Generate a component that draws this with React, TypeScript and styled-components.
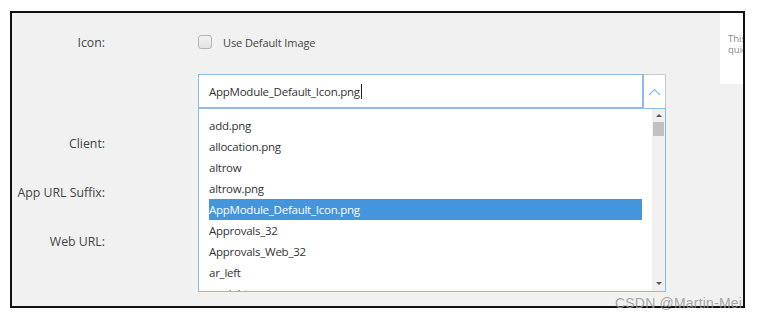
import React from "react";
import styled, { createGlobalStyle } from "styled-components";

const Global = createGlobalStyle`
  html, body { margin: 0; padding: 0; background: #ffffff; }
  body { font-family: "Segoe UI", "Open Sans", "Noto Sans", sans-serif; }
`;

const Page = styled.div`
  width: 765px;
  height: 319px;
  position: relative;
  overflow: hidden;
  padding: 11px 0 0 10px;
  box-sizing: border-box;
`;

const Frame = styled.div`
  width: 735px;
  height: 297px;
  box-sizing: border-box;
  border: 2px solid #111;
  background: #f1f1f1;
  display: flex;
  overflow: hidden;
`;

const Form = styled.div`
  flex: 1;
  display: flex;
  flex-direction: column;
  padding-top: 19px;
`;

const Row = styled.div<{ $h: number }>`
  display: flex;
  align-items: center;
  height: ${(p) => p.$h}px;
`;

const Label = styled.div`
  width: 93px;
  text-align: right;
  font-size: 12.3px;
  color: #444;
  flex: none;
  white-space: nowrap;
`;

const Field = styled.div`
  margin-left: 93px;
  display: flex;
  align-items: center;
`;

const Check = styled.span`
  width: 12px;
  height: 12px;
  border: 1px solid #b4b4b4;
  border-radius: 3px;
  background: linear-gradient(#f2f2f2, #e3e3e3);
  flex: none;
`;

const CheckText = styled.span`
  margin-left: 11px;
  font-size: 11px;
  letter-spacing: -0.1px;
  color: #444;
`;

const ComboRow = styled.div`
  margin-left: 186px;
  margin-top: 22px;
  position: relative;
  width: 468px;
  height: 34px;
  display: flex;
`;

const Input = styled.div`
  flex: 1;
  box-sizing: border-box;
  border: 1px solid #8ebbee;
  border-width: 1px 2px 1px 1px;
  background: #fff;
  display: flex;
  align-items: center;
  padding-left: 10px;
  font-size: 11.5px;
  letter-spacing: -0.25px;
  color: #333;
`;

const Caret = styled.span`
  display: inline-block;
  width: 1px;
  height: 15px;
  background: #222;
  margin-left: 1px;
`;

const Toggle = styled.div`
  width: 22px;
  box-sizing: border-box;
  border-top: 1px solid #c9c9c9;
  border-right: 1px solid #c9c9c9;
  background: #fff;
  display: flex;
  align-items: center;
  justify-content: center;
  padding-top: 1px;
`;

const List = styled.div`
  position: absolute;
  top: 100%;
  left: 0;
  width: 468px;
  height: 184px;
  box-sizing: border-box;
  border: 1px solid #8ebbee;
  background: #fff;
  display: flex;
  overflow: hidden;
  z-index: 2;
`;

const Items = styled.div`
  flex: 1;
  padding: 6px 10px 0 10px;
`;

const Item = styled.div<{ $sel?: boolean }>`
  height: 21px;
  line-height: 21px;
  font-size: 11.5px;
  letter-spacing: -0.25px;
  white-space: nowrap;
  color: ${(p) => (p.$sel ? "#fff" : "#333")};
  background: ${(p) => (p.$sel ? "#4495dc" : "transparent")};
`;

const Scroll = styled.div`
  width: 13px;
  background: #f0f0f0;
  display: flex;
  flex-direction: column;
  align-items: center;
`;

const Arrow = styled.div<{ $down?: boolean }>`
  width: 0;
  height: 0;
  border-left: 3px solid transparent;
  border-right: 3px solid transparent;
  ${(p) =>
    p.$down
      ? "border-top: 3px solid #555; margin-top: auto; margin-bottom: 6px;"
      : "border-bottom: 3px solid #555; margin-top: 5px;"}
`;

const Thumb = styled.div`
  width: 11px;
  height: 14px;
  background: #c1c1c1;
  margin-top: 5px;
`;

const Aside = styled.div`
  width: 23px;
  height: 71px;
  background: #fff;
  flex: none;
  overflow: hidden;
  padding: 20px 0 0 8px;
  box-sizing: border-box;
  font-size: 9.5px;
  color: #888;
`;

const AsideLine = styled.div`
  white-space: nowrap;
  height: 11px;
  line-height: 11px;
`;

const Watermark = styled.div`
  position: absolute;
  left: 615px;
  top: 295px;
  font-family: "Liberation Sans", Arial, sans-serif;
  font-size: 14px;
  color: rgba(150, 150, 150, 0.85);
  letter-spacing: 0.2px;
`;

const items = [
  "add.png",
  "allocation.png",
  "altrow",
  "altrow.png",
  "AppModule_Default_Icon.png",
  "Approvals_32",
  "Approvals_Web_32",
  "ar_left",
  "ar_right",
];

export default function App() {
  return (
    <Page>
      <Global />
      <Frame>
        <Form>
          <Row $h={20}>
            <Label>Icon:</Label>
            <Field>
              <Check />
              <CheckText>Use Default Image</CheckText>
            </Field>
          </Row>
          <ComboRow>
            <Input>
              AppModule_Default_Icon.png
              <Caret />
            </Input>
            <Toggle>
              <svg width="13" height="8" viewBox="0 0 13 8">
                <path d="M1 7 L6.5 1.5 L12 7" fill="none" stroke="#8ebbee" strokeWidth="1.2" />
              </svg>
            </Toggle>
            <List>
              <Items>
                {items.map((t) => (
                  <Item key={t} $sel={t === "AppModule_Default_Icon.png"}>
                    {t}
                  </Item>
                ))}
              </Items>
              <Scroll>
                <Arrow />
                <Thumb />
                <Arrow $down />
              </Scroll>
            </List>
          </ComboRow>
          <Row $h={49} style={{ marginTop: 11 }}>
            <Label>Client:</Label>
          </Row>
          <Row $h={49}>
            <Label>App URL Suffix:</Label>
          </Row>
          <Row $h={49}>
            <Label>Web URL:</Label>
          </Row>
        </Form>
        <Aside>
          <AsideLine>This</AsideLine>
          <AsideLine>quick</AsideLine>
        </Aside>
      </Frame>
      <Watermark>CSDN @Martin-Mei</Watermark>
    </Page>
  );
}
